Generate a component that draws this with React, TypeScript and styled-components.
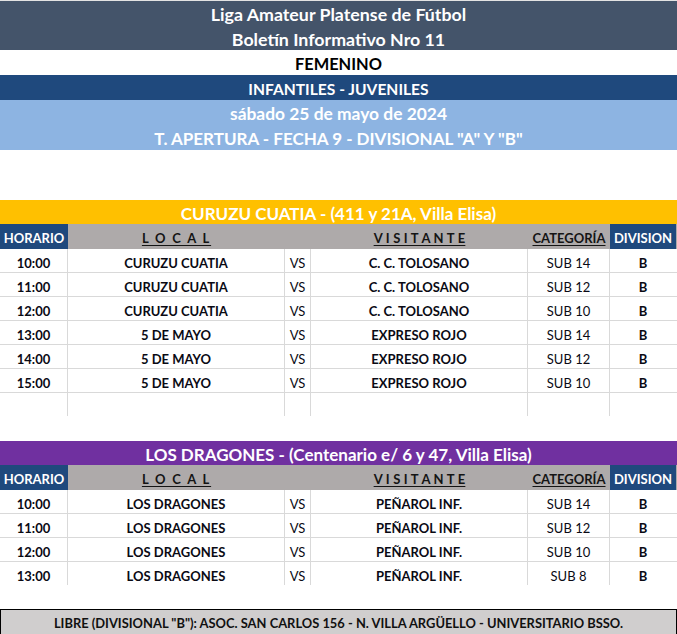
import React from "react";
import styled, { createGlobalStyle } from "styled-components";

const GlobalStyle = createGlobalStyle`
  html, body { margin: 0; padding: 0; background: #ffffff; }
  body { font-family: Lato, "Open Sans", "Liberation Sans", sans-serif; color: #000; }
`;

const Sheet = styled.div`
  width: 677px;
  display: flex;
  flex-direction: column;
  border-top: 1px solid #e3e3e3;
  box-sizing: border-box;
`;

const Band = styled.div<{ $bg: string; $fg: string; $h: number }>`
  height: ${(p) => p.$h}px;
  background: ${(p) => p.$bg};
  color: ${(p) => p.$fg};
  font-weight: 700;
  display: flex;
  flex-direction: column;
`;

const BandLine = styled.div<{ $size: number }>`
  flex: 1;
  display: flex;
  align-items: center;
  justify-content: center;
  white-space: nowrap;
  padding-top: 2px;
  font-size: ${(p) => p.$size}px;
`;

const Gap = styled.div<{ $h: number }>`
  height: ${(p) => p.$h}px;
`;

const COLS = "68px 217px 26px 217px 82px 66px";

const Grid = styled.div`
  display: grid;
  grid-template-columns: ${COLS};
`;

const HeadRow = styled(Grid)`
  height: 25px;
  background: #aeaaaa;
`;

const HeadCell = styled.div<{ $dark?: boolean; $spacing?: number }>`
  display: flex;
  align-items: center;
  justify-content: center;
  padding-top: 3px;
  font-weight: 700;
  font-size: 13px;
  white-space: nowrap;
  background: ${(p) => (p.$dark ? "#1f497d" : "transparent")};
  color: ${(p) => (p.$dark ? "#ffffff" : "#141414")};
  & > span {
    text-decoration: ${(p) => (p.$dark ? "none" : "underline")};
    text-decoration-thickness: 1px;
    text-underline-offset: 2px;
    letter-spacing: ${(p) => p.$spacing ?? 0}px;
  }
`;

const Row = styled(Grid)<{ $last?: boolean }>`
  height: 24px;
  box-sizing: border-box;
  border-bottom: 1px solid ${(p) => (p.$last ? "transparent" : "#d9d9d9")};
`;

const Cell = styled.div<{ $bold?: boolean; $edge?: boolean }>`
  display: flex;
  align-items: center;
  justify-content: center;
  padding-top: 4px;
  box-sizing: border-box;
  border-right: ${(p) => (p.$edge ? "none" : "1px solid #d9d9d9")};
  font-size: 13px;
  font-weight: ${(p) => (p.$bold ? 700 : 400)};
  color: #0a0a14;
  white-space: nowrap;
`;

const Footer = styled.div`
  height: 26px;
  box-sizing: border-box;
  border: 1px solid #000;
  background: #d0cece;
  display: flex;
  align-items: center;
  justify-content: center;
  padding-top: 2px;
  font-weight: 700;
  font-size: 12.9px;
  color: #111;
  white-space: nowrap;
`;

type Match = { time: string; local: string; visit: string; cat: string; div: string };

const curuzu: Match[] = [
  { time: "10:00", local: "CURUZU CUATIA", visit: "C. C. TOLOSANO", cat: "SUB 14", div: "B" },
  { time: "11:00", local: "CURUZU CUATIA", visit: "C. C. TOLOSANO", cat: "SUB 12", div: "B" },
  { time: "12:00", local: "CURUZU CUATIA", visit: "C. C. TOLOSANO", cat: "SUB 10", div: "B" },
  { time: "13:00", local: "5 DE MAYO", visit: "EXPRESO ROJO", cat: "SUB 14", div: "B" },
  { time: "14:00", local: "5 DE MAYO", visit: "EXPRESO ROJO", cat: "SUB 12", div: "B" },
  { time: "15:00", local: "5 DE MAYO", visit: "EXPRESO ROJO", cat: "SUB 10", div: "B" },
  { time: "", local: "", visit: "", cat: "", div: "" },
];

const dragones: Match[] = [
  { time: "10:00", local: "LOS DRAGONES", visit: "PEÑAROL INF.", cat: "SUB 14", div: "B" },
  { time: "11:00", local: "LOS DRAGONES", visit: "PEÑAROL INF.", cat: "SUB 12", div: "B" },
  { time: "12:00", local: "LOS DRAGONES", visit: "PEÑAROL INF.", cat: "SUB 10", div: "B" },
  { time: "13:00", local: "LOS DRAGONES", visit: "PEÑAROL INF.", cat: "SUB 8", div: "B" },
];

const Header = () => (
  <HeadRow>
    <HeadCell $dark><span>HORARIO</span></HeadCell>
    <HeadCell $spacing={1.8}><span>L O C A L</span></HeadCell>
    <HeadCell />
    <HeadCell $spacing={0.2}><span>V I S I T A N T E</span></HeadCell>
    <HeadCell><span>CATEGORÍA</span></HeadCell>
    <HeadCell $dark><span>DIVISION</span></HeadCell>
  </HeadRow>
);

const Venue = ({ title, color, rows }: { title: string; color: string; rows: Match[] }) => (
  <>
    <Band $bg={color} $fg="#ffffff" $h={24}>
      <BandLine $size={17}>{title}</BandLine>
    </Band>
    <Header />
    {rows.map((m, i) => (
      <Row key={i} $last={i === rows.length - 1}>
        <Cell $bold>{m.time}</Cell>
        <Cell $bold>{m.local}</Cell>
        <Cell>{m.local ? "VS" : ""}</Cell>
        <Cell $bold>{m.visit}</Cell>
        <Cell>{m.cat}</Cell>
        <Cell $bold $edge>{m.div}</Cell>
      </Row>
    ))}
  </>
);

export default function App() {
  return (
    <>
      <GlobalStyle />
      <Sheet>
        <Band $bg="#44546a" $fg="#ffffff" $h={49}>
          <BandLine $size={17.8}>Liga Amateur Platense de Fútbol</BandLine>
          <BandLine $size={17.8}>Boletín Informativo Nro 11</BandLine>
        </Band>
        <Band $bg="#ffffff" $fg="#000000" $h={25}>
          <BandLine $size={16.4}>FEMENINO</BandLine>
        </Band>
        <Band $bg="#1f497d" $fg="#ffffff" $h={25}>
          <BandLine $size={15.6}>INFANTILES - JUVENILES</BandLine>
        </Band>
        <Band $bg="#8db4e2" $fg="#ffffff" $h={50}>
          <BandLine $size={17.4}>sábado 25 de mayo de 2024</BandLine>
          <BandLine $size={17}>T. APERTURA - FECHA 9 - DIVISIONAL "A" Y "B"</BandLine>
        </Band>
        <Gap $h={50} />
        <Venue title="CURUZU CUATIA - (411 y 21A, Villa Elisa)" color="#ffc000" rows={curuzu} />
        <Gap $h={24} />
        <Venue title="LOS DRAGONES - (Centenario e/ 6 y 47, Villa Elisa)" color="#7030a0" rows={dragones} />
        <Gap $h={23} />
        <Footer>LIBRE (DIVISIONAL "B"): ASOC. SAN CARLOS 156 - N. VILLA ARGÜELLO - UNIVERSITARIO BSSO.</Footer>
      </Sheet>
    </>
  );
}
